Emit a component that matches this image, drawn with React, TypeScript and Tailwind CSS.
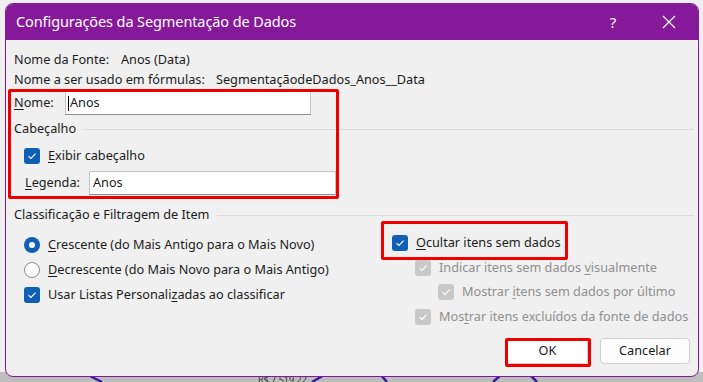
import React from "react";

const font = { fontFamily: '"Noto Sans", "Open Sans", "Liberation Sans", sans-serif' };

function Check({ disabled = false }: { disabled?: boolean }) {
  return (
    <span
      className={
        "inline-flex items-center justify-center w-[16px] h-[16px] rounded-[3px] shrink-0 " +
        (disabled ? "bg-[#c8c8c8]" : "bg-[#0f5fb5]")
      }
    >
      <svg width="10" height="8" viewBox="0 0 10 8">
        <path d="M1.5 4.2 L3.9 6.4 L8.6 1.6" fill="none" stroke="#ffffff" strokeWidth="1.1" />
      </svg>
    </span>
  );
}

function Radio({ on }: { on: boolean }) {
  return on ? (
    <span className="inline-flex items-center justify-center w-[16px] h-[16px] rounded-full bg-[#0f5fb5] shrink-0">
      <span className="w-[6px] h-[6px] rounded-full bg-white" />
    </span>
  ) : (
    <span className="inline-block w-[16px] h-[16px] rounded-full bg-white border border-[#8a8a8a] shrink-0" />
  );
}

function U({ children }: { children: React.ReactNode }) {
  return <span className="underline underline-offset-[2px]">{children}</span>;
}

export default function App() {
  return (
    <div className="relative w-[703px] h-[382px] bg-[#efefef] overflow-hidden text-[#1b1b1b]" style={font}>
      {/* background chart strip */}
      <div className="absolute left-0 right-0 top-[372px] h-[10px] bg-[#bdbdbd]" />
      <div className="absolute left-[258px] top-[375px] text-[9px] leading-[9px] text-[#333]">R$ 7.519,22</div>
      <svg className="absolute left-0 top-[370px]" width="703" height="12" viewBox="0 0 703 12">
        <path d="M86 4 L102 12" stroke="#3d1aa0" strokeWidth="2.5" fill="none" />
        <path d="M312 12 L326 4" stroke="#3d1aa0" strokeWidth="2.5" fill="none" />
        <path d="M380 4 L387 12" stroke="#3d1aa0" strokeWidth="2.5" fill="none" />
        <path d="M493 12 L502 4" stroke="#3d1aa0" strokeWidth="2.5" fill="none" />
        <path d="M529 4 L537 12" stroke="#3d1aa0" strokeWidth="2.5" fill="none" />
      </svg>

      {/* dialog */}
      <div className="absolute left-[5px] top-[3px] w-[694px] h-[374px] rounded-[8px] border border-[#86199a] bg-[#f0f0f0] overflow-hidden flex flex-col">
        {/* title bar */}
        <div className="h-[36px] bg-[#86199a] flex items-center text-white shrink-0">
          <div className="pl-[10px] text-[14.5px] tracking-[-0.1px]">Configurações da Segmentação de Dados</div>
          <div className="ml-auto w-[40px] flex justify-center text-[15px] mr-[16px]">?</div>
          <div className="w-[40px] flex justify-center mr-[9px]">
            <svg width="14" height="14" viewBox="0 0 14 14">
              <path d="M1 1 L13 13 M13 1 L1 13" stroke="#ffffff" strokeWidth="1.2" />
            </svg>
          </div>
        </div>

        {/* body */}
        <div className="relative flex-1 flex flex-col text-[12.7px]">
          <div className="h-[20px] mt-[10px] flex items-center pl-[8px]">
            <span className="w-[107px]">Nome da Fonte:</span>
            <span>Anos (Data)</span>
          </div>
          <div className="h-[20px] flex items-center pl-[8px]">
            <span className="w-[202px]">Nome a ser usado em fórmulas:</span>
            <span>SegmentaçãodeDados_Anos__Data</span>
          </div>
          <div className="h-[26px] flex items-center pl-[8px]">
            <span className="w-[51px]">
              <U>N</U>ome:
            </span>
            <div className="w-[246px] h-[24px] bg-white border border-[#c3c3c3] border-b-[#8c8c8c] flex items-center pl-[2px]">
              <span className="w-[1px] h-[15px] bg-black mr-[1px]" />
              Anos
            </div>
          </div>
          <div className="h-[20px] mt-[3px] flex items-center pl-[8px]">
            <span>Cabeçalho</span>
            <div className="flex-1 h-px bg-[#dadada] ml-[8px] mr-[4px]" />
          </div>
          <div className="h-[20px] mt-[7px] flex items-center pl-[18px] gap-[8px]">
            <Check />
            <span>
              <U>E</U>xibir cabeçalho
            </span>
          </div>
          <div className="h-[26px] mt-[4px] flex items-center pl-[19px]">
            <span className="w-[64px]">
              <U>L</U>egenda:
            </span>
            <div className="w-[247px] h-[24px] bg-white border border-[#c3c3c3] border-b-[#8c8c8c] flex items-center pl-[3px]">
              Anos
            </div>
          </div>
          <div className="h-[20px] mt-[9px] flex items-center pl-[8px]">
            <span>Classificação e Filtragem de Item</span>
            <div className="flex-1 h-px bg-[#dadada] ml-[8px] mr-[4px]" />
          </div>

          <div className="flex">
            <div className="w-[386px] pl-[18px] mt-[7px] flex flex-col">
              <div className="h-[25px] flex items-center gap-[8px]">
                <Radio on />
                <span>
                  <U>C</U>rescente (do Mais Antigo para o Mais Novo)
                </span>
              </div>
              <div className="h-[25px] flex items-center gap-[8px]">
                <Radio on={false} />
                <span>
                  <U>D</U>ecrescente (do Mais Novo para o Mais Antigo)
                </span>
              </div>
              <div className="h-[25px] flex items-center gap-[8px]">
                <Check />
                <span>
                  Usar Listas Personali<U>z</U>adas ao classificar
                </span>
              </div>
            </div>
            <div className="mt-[5px] flex flex-col">
              <div className="h-[25px] flex items-center gap-[8px]">
                <Check />
                <span>
                  <U>O</U>cultar itens sem dados
                </span>
              </div>
              <div className="h-[25px] flex items-center gap-[8px] pl-[23px] text-[#8f8f8f]">
                <Check disabled />
                <span>
                  Indicar itens sem dados <U>v</U>isualmente
                </span>
              </div>
              <div className="h-[24px] flex items-center gap-[8px] pl-[46px] text-[#8f8f8f]">
                <Check disabled />
                <span>
                  Mostrar <U>i</U>tens sem dados por último
                </span>
              </div>
              <div className="h-[25px] flex items-center gap-[8px] pl-[23px] text-[#8f8f8f]">
                <Check disabled />
                <span>
                  Mos<U>t</U>rar itens excluídos da fonte de dados
                </span>
              </div>
            </div>
          </div>

          <div className="flex justify-end gap-[12px] pr-[8px] mt-[9px]">
            <div className="w-[81px] h-[26px] bg-white border border-[#d0d0d0] rounded-[4px] flex items-center justify-center">
              OK
            </div>
            <div className="w-[90px] h-[26px] bg-[#fdfdfd] border border-[#d0d0d0] rounded-[4px] flex items-center justify-center">
              Cancelar
            </div>
          </div>
        </div>
      </div>

      {/* red annotation boxes */}
      <div className="absolute left-[8px] top-[89px] w-[331px] h-[110px] border-[3px] border-[#ee0000] rounded-[2px]" />
      <div className="absolute left-[381px] top-[221px] w-[187px] h-[39px] border-[3px] border-[#ee0000] rounded-[2px]" />
      <div className="absolute left-[505px] top-[338px] w-[86px] h-[29px] border-[3px] border-[#ee0000] rounded-[2px]" />
    </div>
  );
}
